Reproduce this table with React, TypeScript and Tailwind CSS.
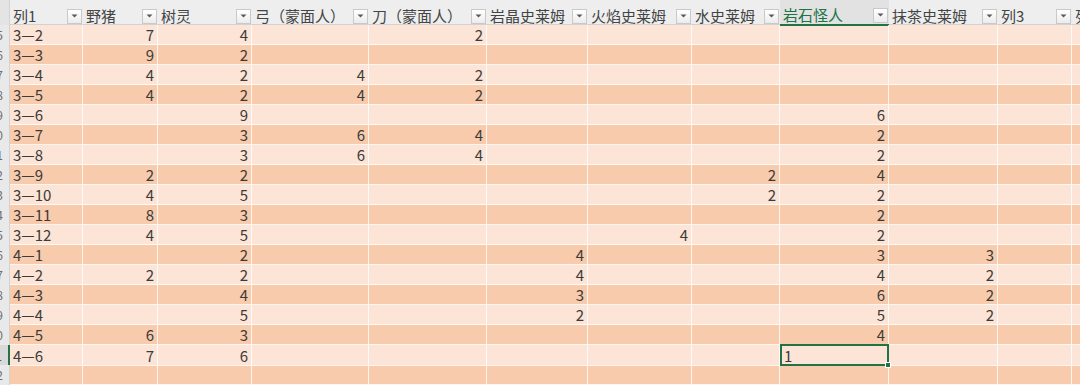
import React from "react";

const headers = [
  "列1",
  "野猪",
  "树灵",
  "弓（蒙面人）",
  "刀（蒙面人）",
  "岩晶史莱姆",
  "火焰史莱姆",
  "水史莱姆",
  "岩石怪人",
  "抹茶史莱姆",
  "列3",
  "列4",
];

const rows: string[][] = [
  ["3—2", "7", "4", "", "2"],
  ["3—3", "9", "2"],
  ["3—4", "4", "2", "4", "2"],
  ["3—5", "4", "2", "4", "2"],
  ["3—6", "", "9", "", "", "", "", "", "6"],
  ["3—7", "", "3", "6", "4", "", "", "", "2"],
  ["3—8", "", "3", "6", "4", "", "", "", "2"],
  ["3—9", "2", "2", "", "", "", "", "2", "4"],
  ["3—10", "4", "5", "", "", "", "", "2", "2"],
  ["3—11", "8", "3", "", "", "", "", "", "2"],
  ["3—12", "4", "5", "", "", "", "4", "", "2"],
  ["4—1", "", "2", "", "", "4", "", "", "3", "3"],
  ["4—2", "2", "2", "", "", "4", "", "", "4", "2"],
  ["4—3", "", "4", "", "", "3", "", "", "6", "2"],
  ["4—4", "", "5", "", "", "2", "", "", "5", "2"],
  ["4—5", "6", "3", "", "", "", "", "", "4"],
  ["4—6", "7", "6", "", "", "", "", "", "1"],
  [],
];

const SEL_ROW = 16;
const SEL_COL = 8;

const grid =
  "grid grid-cols-[10px_73px_75px_94px_117px_118px_101px_104px_88px_109px_109px_74px_80px]";

function Dropdown() {
  return (
    <div className="mr-px flex h-[15px] w-[15px] shrink-0 items-center justify-center border border-[#c9c9c9] bg-gradient-to-b from-white to-[#ececec]">
      <svg width="7" height="4" viewBox="0 0 7 4">
        <path d="M0.5 0.5h6L3.5 3.5z" fill="#5a5a5a" />
      </svg>
    </div>
  );
}

export default function App() {
  return (
    <div className="h-[385px] w-[1080px] overflow-hidden bg-[#f8cbad] font-['Noto_Sans_CJK_SC','Noto_Sans',sans-serif] text-[15px] text-[#3b3b3b]">
      <div className="w-[1152px]">
        {/* header row */}
        <div className={`${grid} h-[25px] border-b border-[#d2d2d2] bg-[#eeeeee]`}>
          <div className="border-r border-[#d2d2d2] bg-[#e4e4e4]" />
          {headers.map((h, i) => (
            <div
              key={i}
              className={
                i === SEL_COL
                  ? "flex items-center justify-between gap-1 border-b-2 border-[#217346] bg-[#e2e2e2] pt-[6px] pl-[3px] text-[#217346]"
                  : "flex items-center justify-between gap-1 pt-[6px] pl-[3px] text-[#444]"
              }
            >
              <span className="whitespace-nowrap leading-[18px]">{h}</span>
              <Dropdown />
            </div>
          ))}
        </div>

        {/* data rows */}
        {rows.map((r, ri) => (
          <div
            key={ri}
            className={`${grid} h-[20px] ${ri % 2 === 0 ? "bg-[#fce4d6]" : "bg-[#f8cbad]"}`}
          >
            <div
              className={
                ri === SEL_ROW
                  ? "flex items-center justify-end overflow-hidden border-r-2 border-[#217346] bg-[#d9d9d9] pr-[6px] text-[12px] leading-none text-[#217346]"
                  : "flex items-center justify-end overflow-hidden border-r border-[#d2d2d2] bg-[#e9e9e9] pr-[6px] text-[12px] leading-none text-[#6e6e6e]"
              }
            >
              <span className="whitespace-nowrap">{ri + 15}</span>
            </div>
            {headers.map((_, ci) => {
              const v = r[ci] ?? "";
              if (ri === SEL_ROW && ci === SEL_COL) {
                return (
                  <div
                    key={ci}
                    className="relative -mt-px flex h-[22px] items-center border-2 border-[#217346] pl-[2px] leading-none"
                  >
                    {v}
                    <div className="absolute -right-[4px] -bottom-[4px] h-[6px] w-[6px] border border-white bg-[#217346]" />
                  </div>
                );
              }
              return (
                <div
                  key={ci}
                  className={`flex items-center border-r border-b border-white/80 leading-none ${
                    ci === 0 ? "justify-start pl-[3px]" : "justify-end pr-[3px]"
                  }`}
                >
                  {v}
                </div>
              );
            })}
          </div>
        ))}
      </div>
    </div>
  );
}
